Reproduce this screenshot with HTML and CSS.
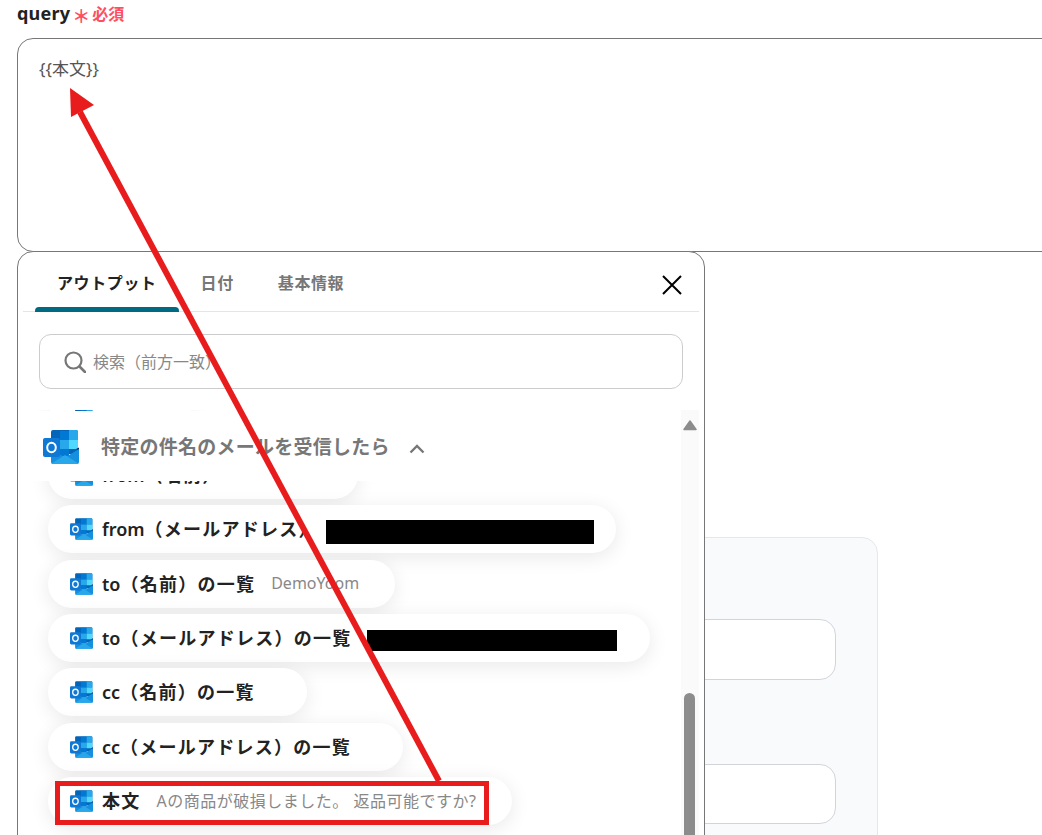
FILE: index.html
```html
<!DOCTYPE html>
<html lang="ja">
<head>
<meta charset="utf-8">
<title>query</title>
<link rel="stylesheet" href="styles.css">
</head>
<body>
<svg width="0" height="0" class="defs">
  <symbol id="outlook" viewBox="0 0 36 34">
    <rect x="8" y="0" width="27" height="24" rx="2" fill="#0364b8"/>
    <rect x="17" y="1" width="9" height="9" fill="#0078d4"/>
    <path d="M26 0h7a2 2 0 0 1 2 2v8h-9z" fill="#28a8ea"/>
    <rect x="8" y="10" width="9" height="9" fill="#0078d4"/>
    <rect x="17" y="10" width="9" height="9" fill="#28a8ea"/>
    <rect x="26" y="10" width="9" height="9" fill="#50d9ff"/>
    <rect x="17" y="19" width="9" height="7" fill="#0078d4"/>
    <path d="M36 17.500v3L33 19z" fill="#0a2767"/>
    <path fill="#1490df" d="M8 19l14 8.500L36 19v13a2 2 0 0 1-2 2H10a2 2 0 0 1-2-2z"/>
    <path fill="#28a8ea" d="M8.500 33.500 22 25l13.500 8.500a2 2 0 0 1-1.500.5H10a2 2 0 0 1-1.500-.5z"/>
    <rect x="0" y="8" width="17" height="19" rx="2" fill="#0f78d4"/>
    <ellipse cx="8.500" cy="17.500" rx="4.300" ry="4.800" fill="none" stroke="#fff" stroke-width="2"/>
  </symbol>
</svg>

<main class="page">
  <div class="label">
    <span class="label-name">query</span>
    <span class="label-star">＊</span>
    <span class="label-req">必須</span>
  </div>
  <div class="textarea">{{本文}}</div>

  <section class="card">
    <div class="card-input"></div>
    <div class="card-input card-input-second"></div>
  </section>

  <section class="panel">
    <div class="tabbar">
      <div class="tabs">
        <div class="tab tab-active">アウトプット</div>
        <div class="tab">日付</div>
        <div class="tab">基本情報</div>
      </div>
      <svg class="close" viewBox="0 0 20 20" width="20" height="20"><path d="M1 1l18 18M19 1 1 19" fill="none" stroke="#000" stroke-width="2"/></svg>
    </div>
    <div class="search">
      <svg class="search-icon" viewBox="0 0 22 22" width="22" height="22"><circle cx="9.500" cy="9.500" r="8" fill="none" stroke="#777" stroke-width="2.200"/><path d="M15.500 15.500 21 21" stroke="#777" stroke-width="2.600" stroke-linecap="round"/></svg>
      <span class="search-text">検索（前方一致）</span>
    </div>
    <div class="results">
      <div class="chips">
        <div class="chip"><svg class="chip-icon"><use href="#outlook"/></svg><span class="chip-label">件名</span></div>
        <div class="chip"><svg class="chip-icon"><use href="#outlook"/></svg><span class="chip-label"><span class="latin">from</span>（名前）</span><span class="chip-value chip-value-latin chip-value-hidden-end">DemoYoom</span></div>
        <div class="chip"><svg class="chip-icon"><use href="#outlook"/></svg><span class="chip-label"><span class="latin">from</span>（メールアドレス）</span><span class="redact redact-from"></span></div>
        <div class="chip"><svg class="chip-icon"><use href="#outlook"/></svg><span class="chip-label"><span class="latin">to</span>（名前）の一覧</span><span class="chip-value chip-value-latin">DemoYoom</span></div>
        <div class="chip"><svg class="chip-icon"><use href="#outlook"/></svg><span class="chip-label"><span class="latin">to</span>（メールアドレス）の一覧</span><span class="redact redact-to"></span></div>
        <div class="chip"><svg class="chip-icon"><use href="#outlook"/></svg><span class="chip-label"><span class="latin">cc</span>（名前）の一覧</span></div>
        <div class="chip"><svg class="chip-icon"><use href="#outlook"/></svg><span class="chip-label"><span class="latin">cc</span>（メールアドレス）の一覧</span></div>
        <div class="chip"><svg class="chip-icon"><use href="#outlook"/></svg><span class="chip-label">本文</span><span class="chip-value">Aの商品が破損しました。 返品可能ですか?</span></div>
      </div>
      <div class="group-head">
        <svg class="group-icon"><use href="#outlook"/></svg>
        <span class="group-title">特定の件名のメールを受信したら</span>
        <svg class="chevron" viewBox="0 0 16 10" width="16" height="10"><path d="M1.500 8.500 8 2l6.500 6.500" fill="none" stroke="#777" stroke-width="2.400"/></svg>
      </div>
      <div class="scrollbar">
        <svg class="scroll-up" viewBox="0 0 14 11" width="14" height="11"><path d="M7 1 13 9.500H1z" fill="#8c8c8c" stroke="#8c8c8c" stroke-width="1.500" stroke-linejoin="round"/></svg>
        <div class="scroll-thumb"></div>
      </div>
    </div>
  </section>
</main>

<div class="highlight"></div>
<svg class="arrow" viewBox="0 0 1042 835" width="1042" height="835">
  <path d="M439 781 80 112" fill="none" stroke="#e81c1c" stroke-width="6"/>
  <path d="M70 88 94 105 71 117z" fill="#e81c1c"/>
</svg>
</body>
</html>
```
FILE: styles.css
```css
* { box-sizing: border-box; }
html, body { margin: 0; height: 100%; }
body {
  position: relative;
  width: 1042px;
  height: 835px;
  overflow: hidden;
  background: #fff;
  font-family: "Noto Sans", "Noto Sans CJK JP", sans-serif;
  color: #222;
}
.defs { position: absolute; }
.page {
  position: relative;
  height: 835px;
  padding-left: 17px;
  overflow: hidden;
}
.label {
  display: flex;
  align-items: center;
  height: 38px;
  padding-bottom: 12px;
  line-height: 26px;
}
.label-name { font-size: 18px; font-weight: 700; letter-spacing: .2px; color: #222; }
.label-star {
  margin-left: 2px;
  padding-top: 3px;
  font-size: 18px;
  font-family: "Noto Sans CJK JP", sans-serif;
  font-weight: 700;
  color: #ff4d63;
}
.label-req { margin-left: 2px; font-size: 16px; font-weight: 700; color: #ff4d63; font-family: "Noto Sans CJK JP", sans-serif; }
.textarea {
  width: 1100px;
  height: 214px;
  padding: 18px 21px;
  border: 1px solid #777;
  border-radius: 16px;
  font-size: 17px;
  line-height: 24px;
  color: #555;
}
.card {
  width: 560px;
  height: 400px;
  margin: 285px 0 0 301px;
  padding: 81px 41px 0 0;
  background: #f9fafb;
  border: 1px solid #e5e7eb;
  border-radius: 16px;
  display: flex;
  flex-direction: column;
  align-items: stretch;
}
.card-input {
  height: 61px;
  background: #fff;
  border: 1px solid #d1d5db;
  border-radius: 16px;
}
.card-input-second { margin-top: 84px; height: 60px; }
.panel {
  position: absolute;
  left: 17px;
  top: 251px;
  width: 688px;
  height: 640px;
  padding: 0 5px;
  background: #fff;
  border: 1px solid #777;
  border-radius: 16px;
}
.tabbar {
  display: flex;
  justify-content: space-between;
  align-items: flex-start;
  height: 60px;
  padding-left: 12px;
  border-bottom: 1px solid #e5e5e5;
}
.tabs { display: flex; }
.tab {
  height: 60px;
  padding: 18px 22px 0;
  font-size: 16px;
  line-height: 24px;
  font-weight: 700;
  letter-spacing: .6px;
  color: #777;
  font-family: "Noto Sans CJK JP", sans-serif;
}
.tab-active { color: #222; position: relative; }
.tab-active::after {
  content: "";
  position: absolute;
  left: 0;
  right: 0;
  bottom: 0;
  height: 5px;
  background: #006a80;
  border-radius: 4px 4px 0 0;
}
.close { margin: 23px 17px 0 0; }
.search {
  display: flex;
  align-items: center;
  height: 55px;
  margin: 22px 16px 0;
  padding-left: 24px;
  border: 1px solid #ccc;
  border-radius: 12px;
}
.search-icon { margin-right: 7px; }
.search-text { padding-bottom: 2px; font-size: 16px; color: #888; font-family: "Noto Sans CJK JP", sans-serif; }
.results {
  position: relative;
  height: 430px;
  margin-top: 21px;
  overflow: hidden;
}
.chips {
  display: flex;
  flex-direction: column;
  align-items: flex-start;
  gap: 6.400px;
  margin-top: -13.600px;
  padding-left: 25px;
}
.chip {
  display: flex;
  align-items: center;
  flex: none;
  height: 48px;
  padding: 0 36px 0 22px;
  background: #fff;
  border-radius: 24px;
  box-shadow: 0 4px 20px rgba(0, 0, 0, .09);
}
.chip-icon { flex: none; width: 23px; height: 22px; margin-right: 9px; }
.chip-label {
  margin-right: 16px;
  padding-bottom: 2px;
  font-size: 18px;
  font-weight: 600;
  letter-spacing: 1.250px;
  color: #222;
  white-space: nowrap;
}
.latin { letter-spacing: 0; }
.chip-value {
  padding-bottom: 2px;
  font-size: 16px;
  letter-spacing: .5px;
  color: #888;
  white-space: nowrap;
}
.chip-value-latin { letter-spacing: 0; }
.chip-value-hidden-end { margin-right: -3px; }
.redact { display: block; background: #000; }
.redact-from { width: 268px; height: 24px; margin: 6px -14px 0 -8px; }
.redact-to { width: 250px; height: 21px; margin: 5px -3px 0 0; }
.group-head {
  position: absolute;
  left: 0;
  top: 1px;
  width: 659px;
  height: 70px;
  display: flex;
  align-items: center;
  padding-left: 20px;
  background: #fff;
}
.group-icon { flex: none; width: 36px; height: 34px; margin: 2px 22px 0 0; }
.group-title {
  padding-bottom: 2px;
  font-size: 19px;
  font-weight: 700;
  letter-spacing: .25px;
  color: #777;
  font-family: "Noto Sans CJK JP", sans-serif;
}
.chevron { margin: 6px 0 0 19px; }
.scrollbar {
  position: absolute;
  right: 0;
  top: 0;
  bottom: 0;
  width: 18px;
  background: #fafafa;
}
.scroll-up { position: absolute; left: 2px; top: 10px; }
.scroll-thumb {
  position: absolute;
  left: 3px;
  top: 283px;
  width: 11px;
  height: 147px;
  background: #8c8c8c;
  border-radius: 6px 6px 0 0;
}
.highlight {
  position: absolute;
  left: 55px;
  top: 781px;
  width: 434px;
  height: 44px;
  border: 5px solid #e81c1c;
}
.arrow { position: absolute; left: 0; top: 0; pointer-events: none; }
```
